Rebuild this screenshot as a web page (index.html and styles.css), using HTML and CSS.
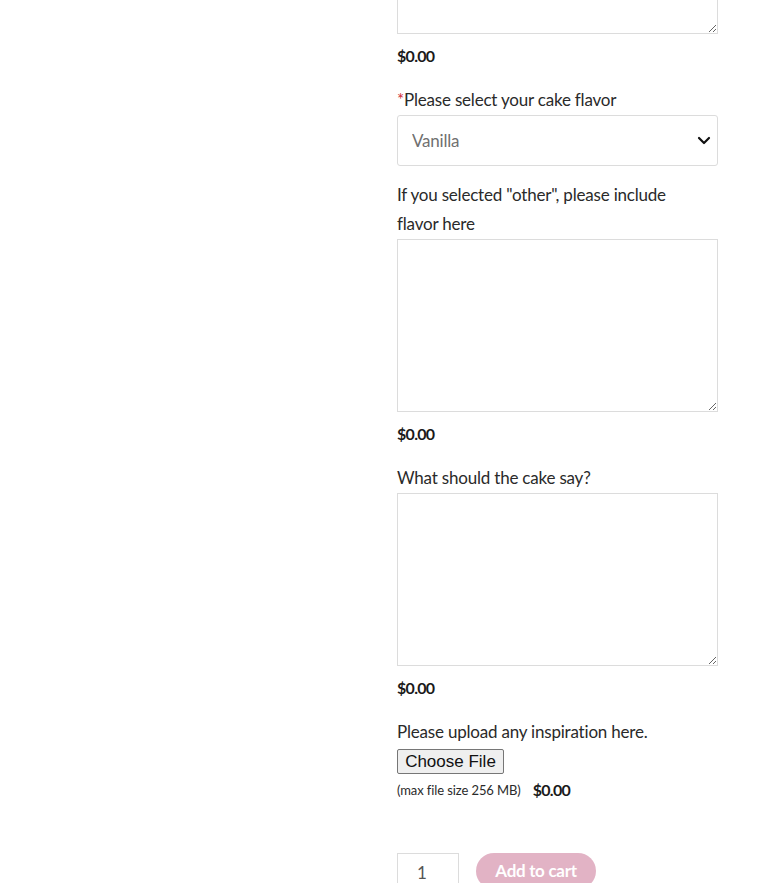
FILE: index.html
```html
<!DOCTYPE html>
<html lang="en">
<head>
<meta charset="utf-8">
<title>Cake order</title>
<link rel="stylesheet" href="styles.css">
</head>
<body>
<div class="page">
  <div class="side"></div>
  <form class="addons">
    <div class="field field-first">
      <textarea class="area area-cut"></textarea>
      <div class="price">$0.00</div>
    </div>

    <div class="field">
      <label class="label"><span class="req">*</span>Please select your cake flavor</label>
      <div class="select-wrap">
        <select class="select">
          <option>Vanilla</option>
          <option>Chocolate</option>
          <option>Other</option>
        </select>
        <svg class="chev" width="14" height="9" viewBox="0 0 14 9" aria-hidden="true">
          <path d="M2 2 L7 7 L12 2" fill="none" stroke="#111" stroke-width="2.2" stroke-linecap="round" stroke-linejoin="round"/>
        </svg>
      </div>
    </div>

    <div class="field">
      <label class="label">If you selected "other", please include flavor here</label>
      <textarea class="area"></textarea>
      <div class="price">$0.00</div>
    </div>

    <div class="field">
      <label class="label">What should the cake say?</label>
      <textarea class="area"></textarea>
      <div class="price">$0.00</div>
    </div>

    <div class="field">
      <label class="label">Please upload any inspiration here.</label>
      <div class="file-row"><button type="button" class="file-btn">Choose File</button></div>
      <div class="file-meta">
        <span class="max">(max file size 256 MB)</span>
        <span class="price price-inline">$0.00</span>
      </div>
    </div>

    <div class="cart">
      <input class="qty" type="text" value="1">
      <button type="button" class="add">Add to cart</button>
    </div>
  </form>
</div>
</body>
</html>
```

FILE: styles.css
```css
html, body {
  margin: 0;
  padding: 0;
  overflow: hidden;
  background: #fff;
}

body {
  font-family: "Source Sans Pro", Lato, "Liberation Sans", sans-serif;
  color: #2a2a2a;
}

.page {
  display: grid;
  grid-template-columns: 397px 321px;
}

.addons {
  display: flex;
  flex-direction: column;
  gap: 15px;
}

.field {
  display: flex;
  flex-direction: column;
}

.field-first {
  margin-top: -139px;
}

.label {
  max-width: 300px;
  font-size: 17px;
  line-height: 29px;
  letter-spacing: -0.2px;
  color: #2a2a2a;
  margin-top: -1px;
  margin-bottom: 1px;
}

.req {
  color: #d0303a;
}

.area {
  box-sizing: border-box;
  width: 321px;
  height: 173px;
  margin: 0;
  border: 1px solid #dcdcdc;
  border-radius: 0;
  background: #fff;
  display: block;
  font-family: inherit;
}

.price {
  font-size: 16px;
  font-weight: 700;
  line-height: 24px;
  margin-top: 10px;
  margin-bottom: 3px;
  letter-spacing: -0.7px;
  color: #1a1a1a;
}

.select-wrap {
  position: relative;
}

.select {
  box-sizing: border-box;
  width: 321px;
  height: 51px;
  display: block;
  appearance: none;
  -webkit-appearance: none;
  border: 1px solid #dcdcdc;
  border-radius: 3px;
  background: #fff;
  padding: 0 14px;
  font-family: inherit;
  font-size: 17px;
  letter-spacing: -0.2px;
  color: #707070;
}

.chev {
  position: absolute;
  right: 7px;
  top: 21px;
}

.file-row {
  margin-top: 2px;
}

.file-btn {
  box-sizing: border-box;
  height: 25px;
  width: 107px;
  padding: 0;
  font-family: "Liberation Sans", Arial, sans-serif;
  font-size: 17px;
  color: #111;
  background: #efefef;
  border: 1px solid #767676;
  border-radius: 2px;
}

.file-meta {
  display: flex;
  align-items: center;
  gap: 12px;
  margin-top: 4px;
  line-height: 24px;
}

.max {
  font-size: 13px;
  letter-spacing: -0.1px;
  color: #2a2a2a;
}

.price-inline {
  margin: 0;
}

.cart {
  display: flex;
  gap: 17px;
  margin-top: 36px;
}

.qty {
  box-sizing: border-box;
  width: 62px;
  height: 38px;
  border: 1px solid #dcdcdc;
  padding: 0 0 0 19px;
  font-family: inherit;
  font-size: 17px;
  color: #555;
  margin: 0;
}

.add {
  box-sizing: border-box;
  width: 120px;
  height: 36px;
  border: 0;
  border-radius: 18px;
  background: #e2b3c5;
  color: #fff;
  font-family: inherit;
  font-weight: 700;
  font-size: 17px;
  letter-spacing: -0.3px;
  padding: 0 0 2px;
}
```
